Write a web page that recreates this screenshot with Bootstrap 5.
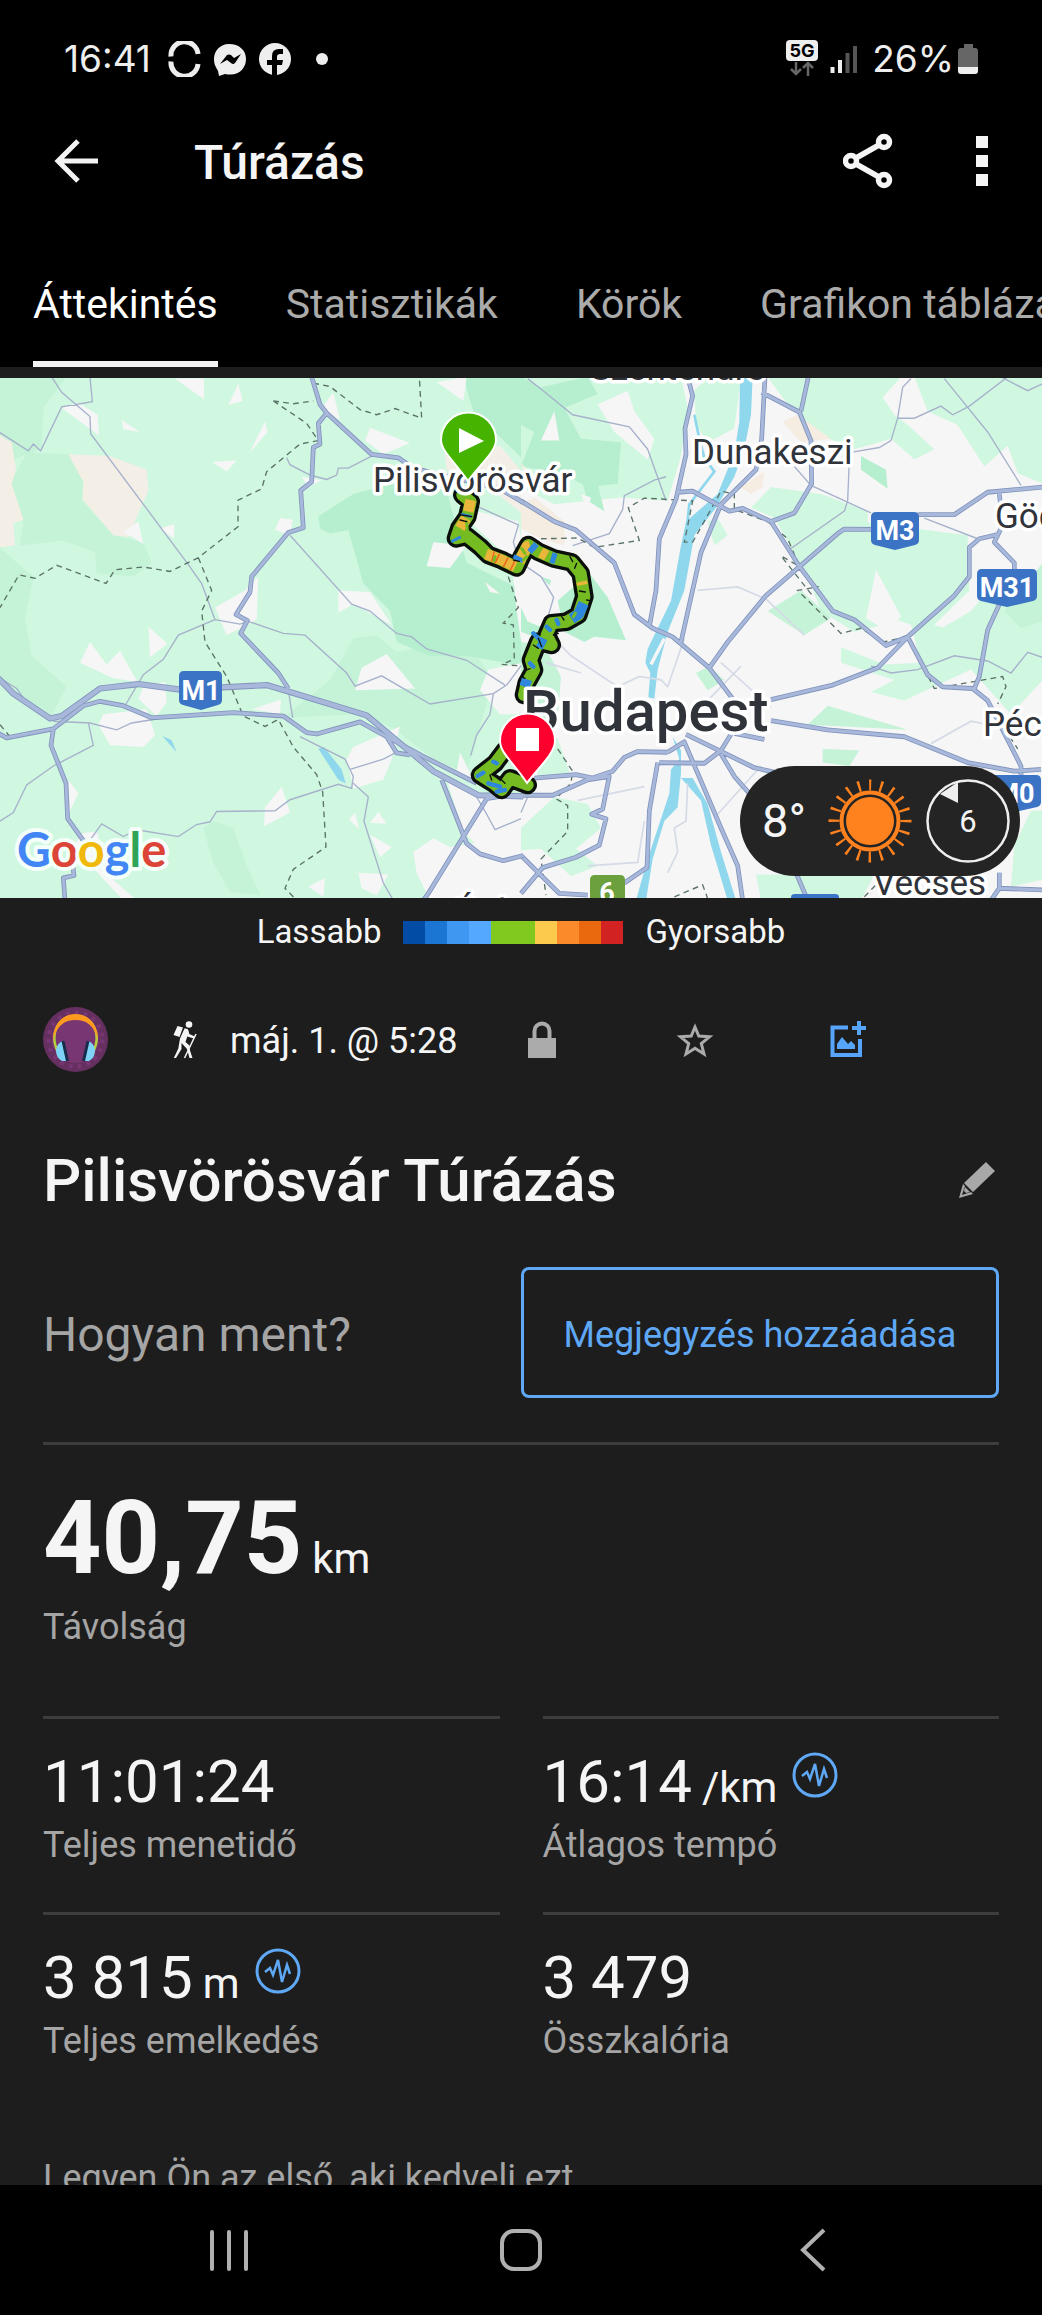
<!DOCTYPE html>
<html lang="hu">
<head>
<meta charset="utf-8">
<meta name="viewport" content="width=device-width, initial-scale=1">
<title>Túrázás</title>
<link href="https://cdn.jsdelivr.net/npm/bootstrap@5.3.0/dist/css/bootstrap.min.css" rel="stylesheet">
<script src="https://cdn.jsdelivr.net/npm/bootstrap@5.3.0/dist/js/bootstrap.bundle.min.js" defer></script>
<style>
  body { font-family: Roboto, "Noto Sans", sans-serif; background: #1d1d1d; color: #f5f5f5; font-size: 36px; line-height: 42px; }
  svg { display: block; flex: none; }
  .app-shell { height: 100vh; }
  .status-bar { height: 118px; padding: 0 64px; font-family: Inter, Roboto, sans-serif; font-size: 37px; line-height: 44px; color: #eee; }
  .status-marks { margin-left: 17px; }
  .app-bar { height: 86px; padding: 0 42px 0 52px; }
  .app-title { font-size: 48px; line-height: 54px; font-weight: 500; margin-left: 92px; padding-top: 3px; }
  .plain-btn { background: none; border: 0; padding: 0; color: inherit; }
  .more-btn { margin-left: 73px; }
  .tab-strip { gap: 58px; padding: 75px 0 0 33px; font-size: 41px; line-height: 50px; overflow: hidden; }
  .tab-strip a { color: #ababab; padding: 0 10px 32px; border-bottom: 6px solid transparent; white-space: nowrap; text-decoration: none; }
  .tab-strip a.active { color: #fff; padding-left: 0; padding-right: 0; border-color: #f2f2f2; }
  .content-pane { min-height: 0; padding-top: 11px; }
  .map-box { height: 520px; background: #d0f7e0; }
  .map-box > svg { width: 100%; height: 100%; }
  .map-box text { font-family: Roboto, sans-serif; }
  .weather-pill { right: 22px; bottom: 22px; height: 110px; width: 280px; padding-left: 22px; gap: 14px; border-radius: 55px; background: #242424; font-size: 47px; line-height: 54px; }
  .legend-row { padding-top: 14px; gap: 22px; font-size: 33px; line-height: 40px; }
  .legend-row i { width: 22px; height: 23px; }
  .page-pad { padding-left: 43px; padding-right: 43px; }
  .meta-row { margin-top: 55px; }
  .meta-row .plain-btn { width: 153px; color: #ababab; }
  .hike-mark { margin: 0 30px 0 65px; }
  .when-text { width: 235px; white-space: nowrap; padding-top: 2px; }
  .title-row { margin-top: 73px; }
  .title-row h1 { font-size: 60px; line-height: 72px; font-weight: 500; }
  .note-row { margin-top: 50px; color: #a5a5a5; font-size: 48px; line-height: 56px; }
  .note-row > span { padding-top: 4px; }
  .note-row .btn { --bs-btn-color: #5fa8f5; --bs-btn-border-color: #5fa8f5; border-width: 3px; border-radius: 8px; font-size: 36px; line-height: 42px; padding: 44px 0 39px; width: 50%; }
  .rule-top { border-top: 3px solid #3d3d3d; }
  .distance-box { margin-top: 44px; padding: 33px 0 68px; }
  .distance-num { font-size: 102px; line-height: 120px; font-weight: 700; height: 120px; }
  .caption-text { color: #a5a5a5; margin-top: 6px; }
  .distance-box .caption-text { margin-top: 8px; }
  .unit-text { font-size: 42px; line-height: 42px; margin-left: 10px; }
  .stat-grid { --bs-gutter-x: 43px; }
  .stat-cell { padding: 27px 0 46px; }
  .stat-num { font-size: 60px; line-height: 72px; white-space: nowrap; }
  .pulse-mark { width: 46px; height: 46px; margin: 6px 0 0 15px; }
  .like-text { color: #a5a5a5; margin: 49px 0 0; }
  .soft-nav { height: 130px; padding: 0 83px; color: #b0b0b0; }
  .road { fill: none; stroke-linejoin: round; }
  .thin { fill: none; stroke: #a6b1cb; stroke-width: 4; }
  .pale { fill: none; stroke: #d5dae6; stroke-width: 5; }
  .border-line { fill: none; stroke: #5a7267; stroke-width: 4; stroke-dasharray: 17 13; }
  .place { font-size: 35px; fill: #30343a; stroke: #fff; stroke-width: 7px; stroke-linejoin: round; paint-order: stroke; }
  .place-big { font-size: 58px; font-weight: 500; }
  .shield { font-size: 27px; font-weight: 700; fill: #fff; text-anchor: middle; }
  .map-box .map-brand { font-family: Lato, sans-serif; font-size: 47px; font-weight: 700; stroke: #f4fff9; stroke-width: 8px; stroke-linejoin: round; paint-order: stroke; }
</style>
</head>
<body>
<div class="app-shell d-flex flex-column overflow-hidden">
  <header class="bg-black flex-shrink-0">
    <div class="status-bar d-flex align-items-center justify-content-between">
      <div class="d-flex align-items-center">
        <span>16:41</span>
        <svg class="status-marks" width="165" height="36" viewBox="0 0 165 36" fill="#eee">
          <g fill="none" stroke="#eee" stroke-width="5"><path d="M3 15.500A13.500 13.500 0 0 1 30 13"/><path d="M3 20.500A13.500 13.500 0 0 0 30 23"/></g>
          <path d="M61 3C52 3 46 10 46 18c0 6 2 8 4 12l1 5 6-2c14 3 21-6 21-15S71 3 61 3z"/><path d="M52 23l7-9q2-1 4 0l3 3 7-4-6 9q-2 2-4 0l-4-3z" fill="#000"/>
          <circle cx="107" cy="18" r="16"/><path d="M104 35V24h-5v-5h5v-4q0-7 7-7h4v5h-3q-3 0-3 3v3h6l-1 5h-5v11z" fill="#000"/>
          <circle cx="154" cy="18" r="6"/>
        </svg>
      </div>
      <div class="d-flex align-items-center">
        <svg width="74" height="38" viewBox="0 0 74 38">
          <rect x="0" y="0" width="32" height="21" rx="4" fill="#eee"/>
          <text x="16" y="17" font-size="18" font-weight="700" text-anchor="middle">5G</text>
          <path d="M10 22v12M5 29l5 5 5-5M22 36V23M17 28l5-5 5 5" fill="none" stroke="#666" stroke-width="2.500"/>
          <path d="M46.500 33v-6M54 33V20" stroke="#eee" stroke-width="4"/><path d="M61.500 33V13M69 33V6" stroke="#555" stroke-width="4"/>
        </svg>
        <span class="ms-2 me-1 ps-1">26%</span>
        <svg width="20" height="30" viewBox="0 0 20 30"><path d="M6 0h9v4h2q3 0 3 3v16H0V7q0-3 3-3h3z" fill="#666"/><path d="M0 23h20v4q0 3-3 3H3q-3 0-3-3z" fill="#eee"/></svg>
      </div>
    </div>
    <div class="app-bar d-flex align-items-center">
      <button class="plain-btn" type="button" aria-label="Vissza"><svg width="50" height="50" viewBox="0 0 50 50" fill="none" stroke="#f3f3f3" stroke-width="5"><path d="M26 5L6 25l20 20M6 25h40"/></svg></button>
      <h2 class="app-title mb-0">Túrázás</h2>
      <button class="plain-btn ms-auto" type="button" aria-label="Megosztás"><svg width="50" height="56" viewBox="0 0 50 56" fill="none" stroke="#f5f5f5" stroke-width="5.500"><circle cx="8" cy="28" r="5.500"/><circle cx="41" cy="9" r="5.500"/><circle cx="41" cy="47" r="5.500"/><path d="M13 25l23-13M13 31l23 13"/></svg></button>
      <button class="plain-btn more-btn" type="button" aria-label="Továbbiak"><svg width="34" height="50" viewBox="0 0 34 50" fill="#f5f5f5"><path d="M10 0h12v12H10zM10 19h12v12H10zM10 38h12v12H10z"/></svg></button>
    </div>
    <nav class="tab-strip d-flex">
      <a class="active" href="#">Áttekintés</a><a href="#">Statisztikák</a><a href="#">Körök</a><a href="#">Grafikon táblázatok</a>
    </nav>
  </header>

  <main class="content-pane flex-grow-1 overflow-hidden">
    <section class="map-box position-relative overflow-hidden">
      <svg viewBox="0 0 1042 520" preserveAspectRatio="xMidYMid slice">
        <defs>
          <path id="motorwayWest" d="M-5 895L40 940 150 1012 185 1005 300 925 415 912 540 928 800 915 870 935 1100 1003 1300 1165 1435 1235 1570 1238"/>
          <path id="roadsWest" d="M-5 1055L20 1068 160 1042 250 975 300 962 370 975 455 1010 700 995 850 1005 920 1053 950 1057 1080 1022 1160 1065 1265 1120 1430 1200M1160 1065L1190 1112 1230 1118M160 1042L153 1090 198 1200 203 1303 260 1380M215 1410L222 1468 190 1475 195 1540M935 20L960 100 980 125 955 155 960 215 940 225 935 325 902 350 910 458 865 472 755 600 750 645 708 710 742 728 722 765 835 880 865 925M980 125L1115 245 1195 255 1240 285 1500 345 1570 385M1270 1540L1285 1520 1460 1245 1500 1238M1325 1190L1400 1375 1440 1405 1510 1425 1570 1410"/>
          <path id="roadsEast" d="M0 380L100 440 165 465 280 560 340 710 395 750 455 775 565 865 635 955M500 20L515 75 492 170 495 245 465 375 415 490 405 640 385 745M732 20L722 200 705 290 600 390 540 530 480 790M722 65L835 122 870 205 872 330 820 415 750 440M862 20L840 120M470 355L515 352 625 410 665 402 750 440M565 865L620 790 735 655 950 475 970 462 1060 463M750 440L835 570 935 700 1000 725 1095 800 1160 775 1220 885 1265 920 1355 925 1400 960 1500 1150V1180M1190 420H1300L1400 355 1565 340M1160 775L1300 655 1345 600V515L1375 490 1430 478M1435 360L1445 450 1420 500 1480 560V590M1440 670L1400 755 1375 890 1360 925M1160 775L1070 865 935 915 750 957M750 1018L920 1045 1150 1065 1340 1140 1480 1165 1560 1160M495 1058L700 1155 770 1170M440 1110L490 1080 600 1330 650 1440 665 1540M40 1185L165 1175 215 1185 275 1165 310 1125 350 1108 440 1110M600 1115L640 1180 690 1235M415 1140L550 1142 600 1105 630 1058M410 1140L385 1280 378 1445 310 1490M640 1055L730 1073M0 1235H95L200 1190 265 1180 245 1275 212 1290 255 1303 235 1380 165 1415 65 1445 0 1520M0 1410L115 1520 200 1525M825 1460L860 1540M1435 1460V1505L1410 1540M1435 1505L1565 1510"/>
          <path id="track" d="M97 285L122 305 112 350 88 385 78 415 110 408 150 440 175 465 215 480 260 502 275 470 295 435 325 455 370 475 425 487 452 520 463 590 445 645 410 665 365 670 350 705 365 735 325 725 303 780 312 810 290 850 282 885M225 1050L195 1090 150 1125 190 1150 215 1170 240 1135 293 1155"/>
        </defs>

        <!-- western half -->
        <g transform="translate(0 -8) scale(.33333 .34435)">
          <g fill="#c5f3d8"><path d="M0 20H200L130 110 125 230 40 260 0 200zM80 240L210 245 250 320 245 380 340 480 430 500 455 560 400 600 290 590 285 530 190 495 60 510 70 440 30 330zM0 515L50 560 100 600 75 720 95 830 200 920 150 1010 30 920 0 900zM850 1010L990 900 1060 780 1130 770 1190 820 1290 800 1430 830 1480 900 1400 1170 1300 1130 1180 1040 1080 1000zM610 1330L640 1310 700 1330 740 1440 780 1525 690 1515 640 1430z"/></g>
          <g fill="#b6efd0"><path d="M955 425L1060 360 1180 330 1340 350 1370 460 1400 560 1570 640V860L1400 830 1290 830 1190 790 1170 700 1090 620 1045 465 990 475 960 460zM1390 20H1570V260L1420 120z"/></g>
          <path d="M0 190L35 210 48 290 35 330 70 435 40 445 45 510 0 515zM205 245L330 250 440 290 445 350 385 485 340 480 248 375 250 325zM1330 210L1500 220 1570 300V420L1480 350 1340 290z" fill="#f3efe7"/>
          <g fill="#f6f6f6"><path d="M185 110L235 95 293 130 297 190zM525 25H612V85zM715 40L728 90 685 102zM365 145L420 180 370 172zM795 150L803 180 747 243zM637 267L710 263 680 295zM1110 168L1230 212 1150 245 1095 205zM1000 65L1020 145 965 110zM415 440L430 505 370 470zM480 460L523 447 522 490zM840 430L878 435 870 480 825 465zM905 310L965 320 925 340zM775 600L770 725 680 770 645 690 735 640zM445 745L502 795 450 835zM270 790L320 855 360 815 412 905 340 895 240 850zM430 920L495 905 500 965 470 1005 415 955zM310 1000L440 985 465 1060 430 1095 330 1090 295 1030zM1015 640L1110 645 1175 740 1060 680 1015 705zM1160 825L1245 925 1065 930 1085 865zM755 985L843 957 840 1000zM1060 1095L1200 1035 1175 1130 1150 1190 1060 1215 1040 1130zM845 1210L870 1285 792 1325 795 1270zM205 1190L235 1230 205 1290zM245 1345L290 1340 340 1480 410 1540H370L220 1385zM1065 1285L1078 1335 1048 1305zM1135 1283L1160 1318 1110 1315zM1110 1350L1175 1385 1140 1415zM1075 1460L1165 1465 1130 1525 1085 1505zM975 1475L970 1530 925 1500zM1300 500L1400 510 1350 575 1280 570zM1430 410L1555 440 1570 540 1510 530 1420 450zM1455 615L1500 650 1470 645zM1310 35L1400 20 1390 90zM1240 1400L1300 1360 1350 1385 1570 1350V1540H1290L1250 1460zM1340 1190L1450 1230 1570 1240V1380L1450 1400 1390 1340zM1380 1110L1420 1190 1370 1165zM1465 870L1570 850V1000L1500 1000 1440 930zM1540 600H1570V830L1550 700z"/></g>
          <path d="M487 1063L515 1075 530 1110zM955 1100L972 1095 1025 1160 1037 1200 1015 1190z" fill="#8fd7ec"/>
          <g class="thin"><path d="M155 20L185 65 270 135 272 185 565 565 605 620 645 725 535 770 490 840 430 885 375 975M270 20L277 92 185 107 122 235 100 215 85 235 0 182M645 725L720 738 745 730 850 765 915 770 1040 880 1065 918 1145 888 1290 970 1480 940 1520 915 1570 850M870 480L1055 680 1110 700 1190 765 1235 775 1280 810 1400 843 1515 915M860 255L870 275 930 305 980 318 1010 305 1015 285 1045 285 1115 250M0 895L50 925 80 965M160 1020L270 1025 350 1045 395 1025 460 1015M265 1025L280 1090 160 1150 80 1205 40 1285 0 1310M270 1365L305 1318 370 1355 410 1335 535 1355 590 1320 630 1312 650 1282 825 1280 870 1248 1015 1203 1055 1215 1060 1180 1035 1130 900 1065M865 930L878 1010M1050 1160L1150 1130 1190 1110M1060 1200L1105 1240 1092 1310 1150 1490 1180 1540M1480 940L1470 1000 1430 1060 1412 1120M1430 395L1555 450 1540 500 1550 530M1430 1240L1460 1290 1485 1335 1570 1300"/></g>
          <g class="border-line"><path d="M940 38L990 48 1080 115 1130 130 1185 112 1265 140 1258 20M820 90L880 98 940 90M820 90L920 155 955 205 900 215 800 295 785 345 714 378V455L595 545 510 585 430 572 345 580 318 620 170 567 105 605 57 595 0 690M595 545L635 640 605 700 615 790 680 890 730 1005 795 1035 835 1015 880 1095 950 1175 968 1225 978 1385 880 1450 855 1505 885 1535M0 1030L30 1065M1525 600L1555 690 1510 735 1540 740 1543 840 1505 855 1570 860"/></g>
        </g>

        <!-- eastern half -->
        <g transform="translate(521 -8) scale(.33333 .34435)">
          <rect y="10" width="1575" height="1540" fill="#f6f6f6"/>
          <g fill="#d0f7e0"><path d="M0 20H480L500 110 480 250 440 380 300 370 100 390 0 340zM520 60L560 20H660L640 170 560 210 525 160zM740 20H1140L1085 80 1120 130 1160 160 1240 230 1180 260 1110 200 1000 230 900 190 800 100zM1180 20H1565V330L1490 300 1460 220 1390 280 1310 160 1220 120zM690 400L750 340 900 360 1040 410V520L1190 520 1200 480 1340 570 1230 540 1190 640 1140 640 1075 580 1040 650 1130 730 1000 760 900 700 860 600 760 430zM560 440L590 430 620 480 580 510zM1020 440L1180 460 1340 480 1345 640 1240 740 1330 770 1280 850 1210 780 1350 700 1400 640H1565V900L1470 1000 1350 870 1150 960 1050 935 1120 900 960 850 960 805 1090 855 1200 850 1170 740 960 670zM705 1465H1060L1020 1540H720zM0 1330L100 1240 200 1260 240 1330 165 1390 230 1440 150 1470 60 1390 0 1395zM40 1040L110 1070 150 1180 50 1180zM1530 1280H1565V1480L1470 1500 1480 1380z"/></g>
          <g fill="#c5f3d8"><path d="M740 700L840 640 930 720 850 770zM920 975L1160 1045 860 1030zM905 1100L1015 1105 985 1150 905 1140zM525 880L565 860 610 900 560 930zM0 790L70 800 120 890 110 1010 60 1020 0 960zM1565 560L1450 700 1500 750 1565 730z"/></g>
          <g fill="#b6efd0"><path d="M0 20L60 50 200 20 230 70 130 110 180 200 300 210 290 330 200 340 120 300 0 280 40 180 0 160zM110 670L205 590 260 660 315 785 220 775 190 790 130 760zM1020 250L1095 290 1100 345 1020 290zM185 330L230 330 250 410 200 380zM0 580L90 610 50 780 0 760z"/></g>
          <g fill="#f6f6f6"><path d="M100 120L115 205 60 205zM230 100L320 60 340 120 400 200 380 260 280 180zM50 590L100 640 95 760 20 730 0 690V580zM1065 580L1140 715 1100 760 1035 720zM0 400L60 430 50 480 0 470zM180 360L210 370 200 410z"/></g>
          <path d="M0 390L40 370 130 440 130 510 60 490 0 460zM785 150L830 130 930 200 840 210zM660 340L730 295 725 340 690 360zM0 270L30 300 20 330z" fill="#f5ece2"/>
          <g fill="#8fd7ec"><path d="M657 20H695L690 130 670 230 640 310 585 400 520 480 490 640 440 760 410 870 400 955 382 950 388 880 373 850 380 810 450 670 480 510 495 440 590 360 640 240 655 150z"/><path d="M455 1065L480 1105V1170L470 1270 430 1310 395 1420 375 1540H345L380 1420 445 1230 450 1160 475 1130zM480 1185L515 1185 560 1260 600 1400 645 1540H620L570 1380 540 1250z"/></g>
          <path d="M520 130L535 200 550 255 580 295 505 390 495 480" fill="none" stroke="#8fd7ec" stroke-width="8"/>
          <path d="M390 855L430 780" stroke="#f6f6f6" stroke-width="10"/>
          <g class="pale"><path d="M530 640L650 630 735 665 850 770M100 780L150 830 290 920 355 890 420 900 440 920 490 780M75 850L180 880M560 960L660 860M600 850L750 980M170 1250L370 1210M500 1200L495 1310 460 1330 470 1400 440 1460M590 1290L720 1150M1230 1085L1350 1020 1400 1030M370 1310L350 1430 200 1440"/></g>
          <g class="thin"><path d="M20 25L60 55 155 130 325 165 380 230 435 380M435 310L400 320 310 365 305 405 265 475 155 510M1170 25L1145 50 1130 140 1110 205 1075 225 985 240M1130 140L1180 140 1260 105 1295 130 1345 105 1460 20M1270 25L1400 180 1500 335M985 260L980 380 970 410 800 525M820 280L870 335 1050 415M1210 430L1370 490M1440 20L1520 60 1565 40M1050 860L1110 880 1190 870 1300 830 1400 845 1470 880 1520 820 1565 835M0 560L60 600 98 660 80 720M0 1285L20 1240"/></g>
          <g class="border-line"><path d="M60 490L170 488 220 515 355 495 322 400 370 372 515 380 490 500 515 500 600 352 640 360V405L740 440 800 490 835 570 780 540 870 650 890 630 830 640 960 765 1020 750 1085 790 1160 775 1240 925 1445 890 1455 920 1430 970M1450 1040L1490 1100M110 1100L155 1165 150 1200 105 1245 140 1265V1340L60 1420 75 1525M460 1530L545 1495 560 1535M1030 1530L1070 1490"/></g>
        </g>

        <!-- roads: casing below, fill above -->
        <g class="road" transform="translate(521 -8) scale(.33333 .34435)">
          <use href="#roadsEast" stroke="#8193bd" stroke-width="14"/><use href="#roadsEast" stroke="#a8b8da" stroke-width="9"/>
        </g>
        <g class="road" transform="translate(0 -8) scale(.33333 .34435)">
          <use href="#roadsWest" stroke="#8193bd" stroke-width="14"/><use href="#motorwayWest" stroke="#8193bd" stroke-width="18"/>
          <use href="#roadsWest" stroke="#a8b8da" stroke-width="9"/><use href="#motorwayWest" stroke="#a8b8da" stroke-width="13"/>
        </g>

        <!-- recorded track, coloured by pace -->
        <g transform="translate(430 22) scale(.33333)" fill="none" stroke-linejoin="round" stroke-linecap="round">
          <use href="#track" stroke="#0b0f0b" stroke-width="56"/>
          <use href="#track" stroke="#75bb22" stroke-width="36"/>
          <g stroke-linecap="butt" stroke-width="32">
            <path d="M122 300L115 335M108 355L90 385M168 462L215 480 256 500M268 485L275 470 290 440 300 437M332 457L350 467M455 545L457 555" stroke="#e9b53a"/>
            <path d="M76 414L80 422M110 342L108 350M262 482L268 470M302 438L316 450M363 472L378 477M461 610L446 643 425 656M345 735L325 725M291 838L284 860" stroke="#2f86dd"/>
            <path d="M187 469L191 470M200 474L204 476M225 486L229 488M245 497L249 499" stroke="#e8641c"/>
          </g>
          <path d="M110 365L112 390M135 425L140 430M275 445L285 460M290 470L280 480M195 470L192 482M430 650L436 640" stroke="#75bb22" stroke-width="9"/>
          <path d="M143 1128L160 1118M175 1150L210 1160M200 1175L225 1170M190 1085L200 1090M310 700L330 720M350 680L360 690M300 790L310 800M380 660L385 672" stroke="#2f86dd" stroke-width="13"/>
          <path d="M95 345L125 350M90 360L110 365M420 470L428 485M440 490L434 505M448 573L466 576M310 735L325 745M325 715L335 740M275 830L285 835M180 1125L185 1140M215 1140L225 1150M470 600L480 602M370 705L385 700M250 480L268 484M395 650L402 660M290 810L300 806" stroke="#0b0f0b" stroke-width="4"/>
        </g>

        <g class="place">
          <text x="590" y="2">Szentendre</text>
          <text x="373" y="114">Pilisvörösvár</text>
          <text x="692" y="86">Dunakeszi</text>
          <text x="995" y="150">Gödöllő</text>
          <text x="983" y="358">Pécel</text>
          <text x="873" y="517">Vecsés</text>
          <text x="455" y="546">Érd</text>
          <text class="place-big" x="523" y="353">Budapest</text>
        </g>
        <path d="M184 293h33q5 0 5 5v24q0 4-4 5l-17 5-18-5q-4-1-4-5v-24q0-5 5-5zM876 134h38q5 0 5 5v23q0 4-4 5l-20 5-20-5q-4-1-4-5v-23q0-5 5-5zM982 191h50q5 0 5 5v22q0 4-4 5l-26 6-26-6q-4-1-4-5v-22q0-5 5-5zM985 397h51q5 0 5 5v22q0 4-4 5l-26 6-26-6zM791 520v-1q0-3 4-3h40q4 0 4 3v1z" fill="#3b74c5"/>
        <path d="M590 520v-18q0-5 5-5h25q5 0 5 5v18z" fill="#6ba03c"/>
        <g class="shield"><text x="201" y="322">M1</text><text x="895" y="162">M3</text><text x="1007" y="219">M31</text><text x="1015" y="425">M0</text><text x="607" y="524">6</text></g>

        <!-- start and finish pins -->
        <path d="M468 103C455 84 441 73 441 62A27 27 0 0 1 496 62C496 74 480 86 468 103z" fill="#46b300" stroke="#fff" stroke-width="2"/>
        <path d="M459 50v25l25-12z" fill="#fff"/>
        <path d="M527 405C514 385 500 375 500 363A27 27 0 0 1 555 363C555 375 540 388 527 405z" fill="#fd002d" stroke="#fff" stroke-width="2"/>
        <path d="M516 350h23v23h-23z" fill="#fff"/>
        <text class="map-brand" x="17" y="489"><tspan fill="#4285f4">G</tspan><tspan fill="#dc4437">o</tspan><tspan fill="#f0b90b">o</tspan><tspan fill="#4285f4">g</tspan><tspan fill="#2fa457">l</tspan><tspan fill="#dc4437">e</tspan></text>
      </svg>

      <div class="weather-pill position-absolute d-flex align-items-center">
        <span>8°</span>
        <svg class="ms-2" width="84" height="84" viewBox="-42 -42 84 84" fill="none" stroke="#ff821e">
          <circle r="24" fill="#ff821e" stroke="none"/><circle r="28.500" stroke-width="4"/>
          <circle r="36" stroke-width="11" stroke-dasharray="2.400 8.910" stroke-dashoffset="1.200" transform="rotate(-90)"/>
        </svg>
        <svg width="84" height="84" viewBox="-42 -42 84 84"><circle r="40.500" fill="none" stroke="#eee" stroke-width="2.500"/><path d="M-10-18V-39L-28-27z" fill="#eee"/><text y="11" font-size="31" text-anchor="middle" fill="#f5f5f5">6</text></svg>
      </div>
    </section>

    <div class="legend-row d-flex justify-content-center align-items-center">
      <span>Lassabb</span>
      <span class="d-flex">
        <i style="background:#024ca5"></i><i style="background:#1a76d2"></i><i style="background:#3f97f2"></i><i style="background:#55a8ff"></i><i style="background:#81c91e"></i><i style="background:#81c91e"></i><i style="background:#fccb4e"></i><i style="background:#fb8a2b"></i><i style="background:#ea690f"></i><i style="background:#d22222"></i>
      </span>
      <span>Gyorsabb</span>
    </div>

    <div class="page-pad">
      <div class="meta-row d-flex align-items-center">
        <svg width="65" height="65" viewBox="0 0 65 65">
          <circle cx="32.500" cy="32.500" r="32.500" fill="#65305f"/><circle cx="32.500" cy="32" r="24" fill="#783672"/>
          <circle cx="32.500" cy="32.500" r="27" fill="none" stroke="#783672" stroke-width="4" stroke-dasharray="4 5"/>
          <path d="M15 45C6 27 15 9 32.500 9S59 27 50 45" fill="none" stroke="#b4d23c" stroke-width="2.500"/>
          <path d="M10 33C10 17 20 7 32.500 7S55 17 55 33C51 18 43 13 32.500 13S14 18 10 33z" fill="#ff9a1f"/>
          <path d="M20 34q-6 2-7 9 0 8 6 11h5zM45 34q6 2 7 9 0 8-6 11h-5z" fill="#7fd3f7"/><path d="M20 34l4.500 20M45 34l-4.500 20" stroke="#162d4c" stroke-width="3"/>
        </svg>
        <svg class="hike-mark" width="27" height="38" viewBox="0 0 27 38" fill="#f5f5f5">
          <circle cx="16" cy="3.500" r="3.300"/><path d="M4.500 5l5.500 1.500-3.500 9.500L.5 14z"/>
          <path d="M11.500 7.500q3.500-.5 4 2l.8 3.500 5.500 2.500-1 2-6.500-2-1.800 5.500 4 3.500.5 5 2.500 7.500h-3L14 28l-5.500-6 0 6-5.500 9H.8l4.500-9.500L7 17.500z"/>
          <path d="M23 13L11.500 37" stroke="#f5f5f5" stroke-width="1.500"/>
        </svg>
        <span class="when-text">máj. 1. @ 5:28</span>
        <button class="plain-btn d-flex justify-content-center" type="button" aria-label="Adatvédelem"><svg width="38" height="38" viewBox="0 0 38 38"><path d="M5 17h28v20H5z" fill="#ababab"/><path d="M11.500 18v-8a7.500 7.500 0 0 1 15 0v8" fill="none" stroke="#ababab" stroke-width="4"/></svg></button>
        <button class="plain-btn d-flex justify-content-center" type="button" aria-label="Kedvenc"><svg width="38" height="38" viewBox="0 0 38 38"><path d="M19 6l3.800 9 10.700.8-8.200 6.700 2.700 10.500-9-5.800-9 5.800 2.700-10.500L4.500 15.800l10.700-.8z" fill="none" stroke="#ababab" stroke-width="3"/></svg></button>
        <button class="plain-btn d-flex justify-content-center" type="button" aria-label="Kép hozzáadása"><svg width="38" height="38" viewBox="0 0 38 38"><path d="M19 6.500H3.500v27.500H31V18" fill="none" stroke="#57a5fa" stroke-width="4"/><path d="M30 0v14M23 7h14" stroke="#57a5fa" stroke-width="4"/><path d="M8 28v-5l5-7 6 7 3-3 4 4v4z" fill="#57a5fa"/></svg></button>
      </div>

      <div class="title-row d-flex align-items-center justify-content-between">
        <h1 class="mb-0">Pilisvörösvár Túrázás</h1>
        <button class="plain-btn" type="button" aria-label="Szerkesztés"><svg width="40" height="38" viewBox="0 0 40 38" fill="#a8a8a8"><path d="M27 0l9 9-22 21-9-9zM0 36l4-14 2 2-3 9 9-3 2 2z"/><path d="M6 25l5 5-4 1-2-2z"/></svg></button>
      </div>

      <div class="note-row d-flex align-items-center justify-content-between">
        <span>Hogyan ment?</span>
        <button class="btn btn-outline-primary" type="button">Megjegyzés hozzáadása</button>
      </div>

      <div class="distance-box rule-top">
        <div class="distance-num">40,75<span class="unit-text fw-normal">km</span></div>
        <div class="caption-text">Távolság</div>
      </div>

      <div class="row stat-grid">
        <div class="col-6"><div class="stat-cell rule-top"><div class="stat-num">11:01:24</div><div class="caption-text">Teljes menetidő</div></div></div>
        <div class="col-6"><div class="stat-cell rule-top"><div class="stat-num d-flex"><span>16:14<span class="unit-text">/km</span></span><svg class="pulse-mark" viewBox="0 0 46 46" fill="none" stroke="#5fa8f5"><circle cx="23" cy="23" r="21" stroke-width="3"/><path d="M10 24l5-4 3 7 5-15 4 22 5-17 3 9" stroke-width="2.500"/></svg></div><div class="caption-text">Átlagos tempó</div></div></div>
        <div class="col-6"><div class="stat-cell rule-top"><div class="stat-num d-flex"><span>3 815<span class="unit-text">m</span></span><svg class="pulse-mark" viewBox="0 0 46 46" fill="none" stroke="#5fa8f5"><circle cx="23" cy="23" r="21" stroke-width="3"/><path d="M10 24l5-4 3 7 5-15 4 22 5-17 3 9" stroke-width="2.500"/></svg></div><div class="caption-text">Teljes emelkedés</div></div></div>
        <div class="col-6"><div class="stat-cell rule-top"><div class="stat-num">3 479</div><div class="caption-text">Összkalória</div></div></div>
      </div>
      <p class="like-text">Legyen Ön az első, aki kedveli ezt</p>
    </div>
  </main>

  <nav class="soft-nav bg-black d-flex align-items-center flex-shrink-0">
    <button class="plain-btn flex-fill d-flex justify-content-center" type="button" aria-label="Legutóbbiak"><svg width="44" height="44" viewBox="0 0 44 44" stroke="currentColor" stroke-width="4" stroke-linecap="round"><path d="M5 4v37M22 4v37M39 4v37"/></svg></button>
    <button class="plain-btn flex-fill d-flex justify-content-center" type="button" aria-label="Kezdőképernyő"><svg width="44" height="44" viewBox="0 0 44 44" fill="none" stroke="currentColor" stroke-width="4"><rect x="3" y="3" width="38" height="38" rx="12"/></svg></button>
    <button class="plain-btn flex-fill d-flex justify-content-center" type="button" aria-label="Vissza"><svg width="44" height="44" viewBox="0 0 44 44" fill="none" stroke="currentColor" stroke-width="4"><path d="M33 2L12 22l21 20"/></svg></button>
  </nav>
</div>
</body>
</html>
